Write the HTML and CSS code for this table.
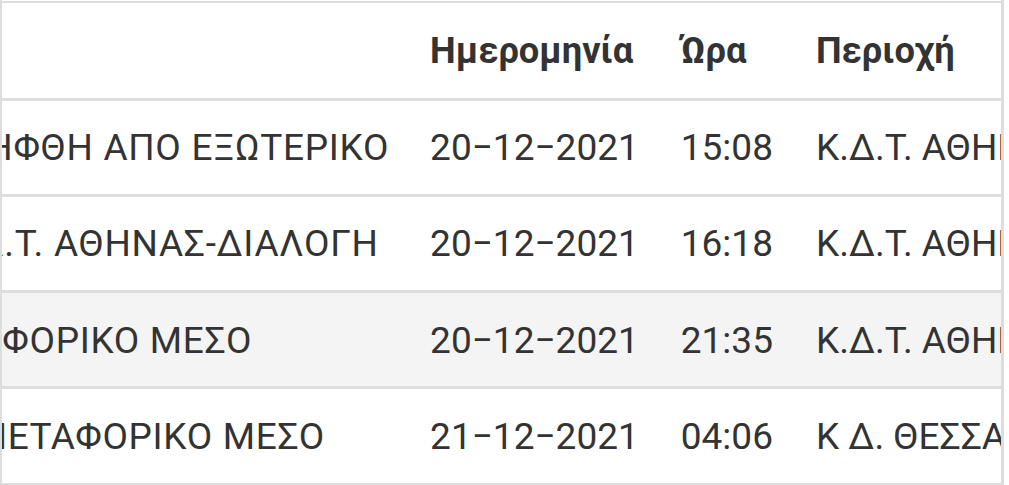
FILE: index.html
```html
<!DOCTYPE html>
<html lang="el">
<head>
<meta charset="utf-8">
<title>Ιστορικό αποστολής</title>
<link rel="stylesheet" href="styles.css">
</head>
<body>
<div class="frame">
  <div class="scroller">
    <table class="tracking">
      <thead>
        <tr>
          <th class="status"></th>
          <th class="date">Ημερομηνία</th>
          <th class="time">Ώρα</th>
          <th>Περιοχή</th>
        </tr>
      </thead>
      <tbody>
        <tr>
          <td class="status">ΠΑΡΑΛΗΦΘΗ ΑΠΟ ΕΞΩΤΕΡΙΚΟ</td>
          <td class="date">20−12−2021</td>
          <td class="time">15:08</td>
          <td>Κ.Δ.Τ. ΑΘΗΝΑΣ</td>
        </tr>
        <tr>
          <td class="status">ΣΤΟ Κ.Δ.Τ. ΑΘΗΝΑΣ-ΔΙΑΛΟΓΗ</td>
          <td class="date">20−12−2021</td>
          <td class="time">16:18</td>
          <td>Κ.Δ.Τ. ΑΘΗΝΑΣ</td>
        </tr>
        <tr class="alt">
          <td class="status">Σ' ΜΕΤΑΦΟΡΙΚΟ ΜΕΣΟ</td>
          <td class="date">20−12−2021</td>
          <td class="time">21:35</td>
          <td>Κ.Δ.Τ. ΑΘΗΝΑΣ</td>
        </tr>
        <tr>
          <td class="status">ΜΕΣΩ ΜΕΤΑΦΟΡΙΚΟ ΜΕΣΟ</td>
          <td class="date">21−12−2021</td>
          <td class="time">04:06</td>
          <td>Κ Δ. ΘΕΣΣΑΛΟΝΙΚΗΣ</td>
        </tr>
      </tbody>
    </table>
  </div>
</div>
</body>
</html>
```

FILE: styles.css
```css
* { box-sizing: border-box; }

html, body {
  margin: 0;
  padding: 0;
  background: #ffffff;
}

body {
  font-family: Roboto, "Noto Sans", "DejaVu Sans", sans-serif;
  color: #333333;
}

.frame {
  width: 1004px;
  height: 485px;
  padding-top: 1px;
  border-left: 2px solid #dddddd;
  border-right: 3px solid #dddddd;
}

.scroller {
  overflow: hidden;
  width: 100%;
  height: 100%;
}

.tracking {
  border-collapse: collapse;
  margin-left: -162px;
  border-top: 2px solid #dddddd;
  font-size: 37px;
  white-space: nowrap;
}

.tracking th,
.tracking td {
  padding: 0 23px 0 23px;
  text-align: left;
  vertical-align: middle;
  border-bottom: 3px solid #dddddd;
  line-height: 1.2;
}

.tracking thead th {
  height: 97px;
  font-size: 36.3px;
  font-weight: 700;
  padding-top: 1px;
}

.tracking tbody td {
  height: 96.3px;
  font-weight: 400;
  padding-top: 2px;
}

.tracking .status {
  letter-spacing: 0.7px;
  padding-right: 18px;
}

.tracking .date {
  padding-right: 19px;
}

.tracking .time {
  padding-right: 20px;
}

.tracking tr.alt td {
  background: #f4f4f4;
}
```
